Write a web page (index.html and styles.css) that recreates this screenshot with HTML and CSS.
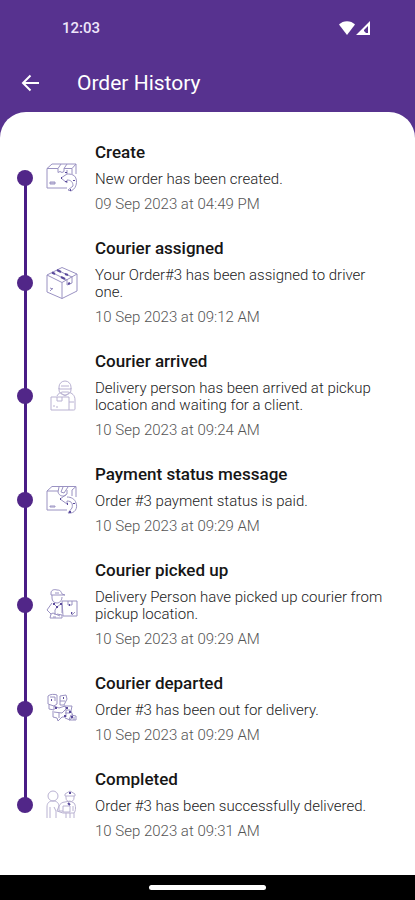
FILE: index.html
```html
<!DOCTYPE html>
<html lang="en">
<head>
<meta charset="utf-8">
<meta name="viewport" content="width=device-width, initial-scale=1">
<title>Order History</title>
<link rel="stylesheet" href="styles.css">
</head>
<body>
<svg class="defs" aria-hidden="true">
  <symbol id="arrow-box" viewBox="0 0 32 32">
    <path d="M1 6.500 6 2h24v10M1 6.500V26h20M1 6.500h11M18 6.500h8L30 2M26 6.500V12M12 6.500 15 2M18 6.500 21 2M12 6.500v4l2-1 2 1 2-1v-3M4 20h5v2H4zM4 21h5"/>
    <path d="M21 8v4l-6 4 6 5v-3c4 0 6 2 6 6l-5 4 3 1c7-3 7-14 2-16-2-1-4-1-6-1"/>
    <path class="strong" d="M20 10v1M15 16h1M20 20v-1M28 18v1M24 28h1"/>
  </symbol>
  <symbol id="return-box" viewBox="0 0 32 32">
    <path d="M1 7 6 2.500h24V13M1 7v19h20M1 7h11M30 2.500 26 6v6M13 3l-1 5c1 4 5 5 8 3M17 3l-2 5 3 1 4-6M4 22h5v1H4z"/>
    <path d="M21 6v4l-7 5 7 5v-3c5 0 6 3 5 7l-4 5c7 1 10-5 8-10-1-4-5-6-9-6"/>
    <path class="strong" d="M14 15h1M21 20h1M28 19v1M23 28h2"/>
  </symbol>
  <symbol id="box" viewBox="0 0 32 32">
    <path d="M16 .5 31 7v17l-15 7.500L1 25V8zM1 8l15 7.500L31 7M16 15.500v16M6 5.500l15 7.500M11 3l15 7M21 13v5l5-2v-6M4 21l3 1M4 24l3-3"/>
    <path class="strong" d="M6 5.500 9 7M11 3l4 2M15 10l4 2M19 7l3 1M22 17l2-1"/>
  </symbol>
  <symbol id="courier-box" viewBox="0 0 32 32">
    <path d="M13 7a6 6 0 0 1 12 0v2H13zM13 8v2a6 5 0 0 0 12 0V8M15 6h8M11 16c1-3 4-3 5-4h6c4 1 7 3 7 8v9c0 1-1 1-2 1H5V17h18v13M11 17v4h5v-4M15 13l4 3 4-3M23 22h5M7 26h2M11 26v2"/>
  </symbol>
  <symbol id="courier-pickup" viewBox="0 0 32 32">
    <path d="M5 4c0-3 3-4 6-3 4 0 4 2 5 4l3 1H5zM6 6v3c0 3 2 5 5 5s5-3 5-6M9 4h4M7 14l4 4 5-4M6 14l-5 7 4 4 2-1 7 3M11 18l-2 3v5M16 12h15v15H17zM22 12v4h4v-4M5 25l-1 4h12v-3l-5-1M16 16v8M26 23v3l3-3M7 28h3"/>
    <path class="strong" d="M7 15h2M14 15h2M10 18h2M23 16h1M25 24h1"/>
  </symbol>
  <symbol id="courier-route" viewBox="0 0 32 32">
    <path d="M2 3c2-2 7-2 9-1v9l-3 2-6-2zM4 4h5v4M14 3l6-1 1 4-3 6h-4zM14 8h5M3 12v4l5 1v-4l5 2 6-2 1 3-4 4-8-1M7 18v6l4 1 1 3 4-4h4v-7M18 13h8l-1 5 2 5-3 4-5-2M20 17h4v3h-5M25 22l5 1v4h-7zM26 24v2M28 24v3M13 20v5"/>
    <path class="strong" d="M5 7h1M17 5h1M9 15h2M20 15h2M24 18v2M19 22v2M25 24h2"/>
  </symbol>
  <symbol id="handover" viewBox="0 0 32 32">
    <path d="M2 7a5 5 0 1 1 10 0 5 5 0 0 1-10 0M1 29V18c0-4 2-6 6-6s6 2 6 6v4h4M4 29V18M10 29v-7l-2-4M19 5l5-3 5 3v2H19zM20 7v2c0 5 8 5 8 0V7M19 13c-3 0-5 2-6 4l-2 5 6 2h11c2-2 2-8 0-10l-4-2zM17 17h7v6h-7zM20 24v5M24 24v5M28 24v5M27 17v5"/>
    <path class="strong" d="M23 4h2M22 14l2 2"/>
  </symbol>
</svg>

<header class="header">
  <div class="status">
    <span class="clock">12:03</span>
    <svg class="signals" viewBox="0 0 32 14" aria-hidden="true">
      <path d="M0 3.500C4-1 12-1 16 3.500L8 14z"/>
      <path fill-rule="evenodd" d="M31 0v14H17zM29 5l-4 4v1l2 2h2z"/>
    </svg>
  </div>
  <div class="toolbar">
    <button class="back" type="button" aria-label="Back">
      <svg viewBox="0 0 18 18" aria-hidden="true"><path d="M9.500 1.500 2 9l7.500 7.500M2 9h16"/></svg>
    </button>
    <h1 class="heading">Order History</h1>
  </div>
</header>

<main class="sheet">
  <ol class="timeline">
    <li class="event">
      <span class="dot"></span>
      <svg class="icon" aria-hidden="true"><use href="#arrow-box"/></svg>
      <div class="details">
        <h2 class="title">Create</h2>
        <p class="text">New order has been created.</p>
        <time class="date">09 Sep 2023 at 04:49 PM</time>
      </div>
    </li>
    <li class="event">
      <span class="dot"></span>
      <svg class="icon" aria-hidden="true"><use href="#box"/></svg>
      <div class="details">
        <h2 class="title">Courier assigned</h2>
        <p class="text">Your Order#3 has been assigned to driver one.</p>
        <time class="date">10 Sep 2023 at 09:12 AM</time>
      </div>
    </li>
    <li class="event">
      <span class="dot"></span>
      <svg class="icon faint" aria-hidden="true"><use href="#courier-box"/></svg>
      <div class="details">
        <h2 class="title">Courier arrived</h2>
        <p class="text">Delivery person has been arrived at pickup location and waiting for a client.</p>
        <time class="date">10 Sep 2023 at 09:24 AM</time>
      </div>
    </li>
    <li class="event">
      <span class="dot"></span>
      <svg class="icon" aria-hidden="true"><use href="#return-box"/></svg>
      <div class="details">
        <h2 class="title">Payment status message</h2>
        <p class="text">Order #3 payment status is paid.</p>
        <time class="date">10 Sep 2023 at 09:29 AM</time>
      </div>
    </li>
    <li class="event">
      <span class="dot"></span>
      <svg class="icon" aria-hidden="true"><use href="#courier-pickup"/></svg>
      <div class="details">
        <h2 class="title">Courier picked up</h2>
        <p class="text">Delivery Person have picked up courier from pickup location.</p>
        <time class="date">10 Sep 2023 at 09:29 AM</time>
      </div>
    </li>
    <li class="event">
      <span class="dot"></span>
      <svg class="icon" aria-hidden="true"><use href="#courier-route"/></svg>
      <div class="details">
        <h2 class="title">Courier departed</h2>
        <p class="text">Order #3 has been out for delivery.</p>
        <time class="date">10 Sep 2023 at 09:29 AM</time>
      </div>
    </li>
    <li class="event">
      <span class="dot"></span>
      <svg class="icon faint" aria-hidden="true"><use href="#handover"/></svg>
      <div class="details">
        <h2 class="title">Completed</h2>
        <p class="text">Order #3 has been successfully delivered.</p>
        <time class="date">10 Sep 2023 at 09:31 AM</time>
      </div>
    </li>
  </ol>
</main>

<footer class="navbar"><span class="pill"></span></footer>
</body>
</html>
```
FILE: styles.css
```css
* { box-sizing: border-box; }

body {
  margin: 0;
  min-height: 100vh;
  display: flex;
  flex-direction: column;
  background: #57328f;
  font-family: Roboto, "Liberation Sans", sans-serif;
}

.defs { display: none; }

.header { padding-bottom: 2px; color: #fff; }

.status {
  display: flex;
  align-items: center;
  justify-content: space-between;
  height: 56px;
  padding: 0 44px 0 62px;
}

.clock { font-size: 15px; line-height: 20px; font-weight: 500; color: #eee5fa; }

.signals { width: 32px; height: 14px; fill: #fff; }

.toolbar {
  display: flex;
  align-items: center;
  height: 54px;
  padding: 0 16px;
}

.back {
  display: flex;
  width: 28px;
  height: 28px;
  margin-right: 33px;
  padding: 5px;
  border: 0;
  background: none;
  color: inherit;
}

.back svg {
  width: 18px;
  height: 18px;
  fill: none;
  stroke: currentColor;
  stroke-width: 2;
}

.heading { margin: 0; font-size: 21px; line-height: 28px; font-weight: 400; }

.sheet {
  flex: 1;
  padding: 18px 24px 22px 17px;
  border-radius: 26px 26px 0 0;
  background: #fff;
}

.timeline { margin: 0; padding: 0; list-style: none; }

.event {
  position: relative;
  display: grid;
  grid-template-columns: 16px 32px 1fr;
  align-items: center;
  column-gap: 13px;
}

.event::before {
  content: "";
  position: absolute;
  top: 0;
  bottom: 0;
  left: 7px;
  width: 3px;
  background: #491d86;
}

.event:first-child::before { top: 50%; }
.event:last-child::before { bottom: 50%; }

.dot {
  position: relative;
  width: 16px;
  height: 16px;
  border-radius: 50%;
  background: #512688;
}

.icon {
  width: 32px;
  height: 32px;
  fill: none;
  stroke: #9a92c2;
  stroke-width: 1;
}

.icon.faint { stroke: #b9b2d2; }

.strong { stroke: #5a4a9c; stroke-width: 2; }

.details {
  display: flex;
  flex-direction: column;
  gap: 8px;
  padding: 12px 0 13px 4px;
}

.title { margin: 0; font-size: 17px; line-height: 21px; font-weight: 500; color: #161616; }

.text, .date { margin: 0; font-size: 15px; line-height: 17px; font-weight: 300; }

.text { color: #222; }

.date { color: #555; }

.navbar {
  display: flex;
  align-items: center;
  justify-content: center;
  height: 25px;
  background: #000;
}

.pill { width: 28%; height: 5px; border-radius: 3px; background: #fff; }
```
